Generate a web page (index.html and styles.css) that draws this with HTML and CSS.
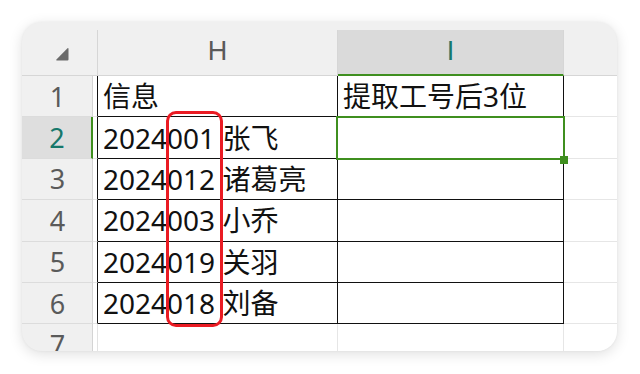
FILE: index.html
```html
<!DOCTYPE html>
<html lang="zh-CN">
<head>
<meta charset="utf-8">
<link rel="stylesheet" href="styles.css">
</head>
<body>
<div class="card">
  <div class="sheet">
    <div class="corner"><svg class="tri" width="14" height="14" viewBox="0 0 14 14"><path d="M12.5 1.2 Q13.5 0.6 13.5 2 L13.5 12.5 Q13.5 13.5 12.5 13.5 L2 13.5 Q0.6 13.5 1.4 12.6 Z" fill="#6b6b6b"/></svg></div>
    <div class="colhdr">H</div>
    <div class="colhdr sel">I</div>
    <div class="colhdr last"></div>

    <div class="rowhdr">1</div><div class="gap edge"></div><div class="cell h">信息</div><div class="cell i">提取工号后3位</div><div class="cell j"></div>
    <div class="rowhdr sel">2</div><div class="gap edge"></div><div class="cell h">2024001 张飞</div><div class="cell i"></div><div class="cell j"></div>
    <div class="rowhdr">3</div><div class="gap edge"></div><div class="cell h">2024012 诸葛亮</div><div class="cell i"></div><div class="cell j"></div>
    <div class="rowhdr">4</div><div class="gap edge"></div><div class="cell h">2024003 小乔</div><div class="cell i"></div><div class="cell j"></div>
    <div class="rowhdr">5</div><div class="gap edge"></div><div class="cell h">2024019 关羽</div><div class="cell i"></div><div class="cell j"></div>
    <div class="rowhdr">6</div><div class="gap edge"></div><div class="cell h">2024018 刘备</div><div class="cell i"></div><div class="cell j"></div>
    <div class="rowhdr">7</div><div class="gap"></div><div class="cell plain"></div><div class="cell plain"></div><div class="cell j"></div>
  </div>
  <div class="selection"></div>
  <div class="handle"></div>
  <div class="mark"></div>
</div>
</body>
</html>
```

FILE: styles.css
```css
* { box-sizing: border-box; }
html, body { margin: 0; background: #ffffff; }
body { width: 640px; height: 374px; overflow: hidden; }

.card {
  position: relative;
  margin: 22px 0 0 22px;
  width: 595px;
  height: 329px;
  border-radius: 20px;
  overflow: hidden;
  background: #f0f0f0;
  box-shadow: 0 3px 14px rgba(0, 0, 0, 0.13), 0 0 3px rgba(0, 0, 0, 0.05);
  font-family: "Noto Sans", "Noto Sans CJK SC", sans-serif;
}

.sheet {
  display: grid;
  grid-template-columns: 71px 5px 240px 226px 1fr;
  grid-template-rows: 46px repeat(7, 41.4px);
  padding-top: 8px;
}

.corner {
  grid-column: 1 / 3;
  border-right: 1px solid #d6d6d6;
  border-bottom: 1px solid #d6d6d6;
  display: flex;
  align-items: flex-end;
  justify-content: flex-end;
  padding: 0 28px 14px 0;
}
.tri { display: block; }

.colhdr {
  border-right: 1px solid #d6d6d6;
  border-bottom: 1px solid #d6d6d6;
  display: flex;
  align-items: center;
  justify-content: center;
  font-family: "Liberation Sans", "Noto Sans", sans-serif;
  font-size: 27px;
  color: #5a5a5a;
  padding-bottom: 2px;
}
.colhdr.sel {
  background: #dadada;
  color: #17786b;
  border-bottom: 2px solid #3f8f1f;
}
.colhdr.last { border-right: none; }

.rowhdr {
  border-right: 1px solid #d4d4d4;
  border-bottom: 1px solid #dcdcdc;
  display: flex;
  align-items: center;
  justify-content: center;
  font-size: 27px;
  color: #5a5a5a;
  padding-left: 1px;
}
.rowhdr.sel {
  background: #dedede;
  color: #17786b;
  border-right: 2px solid #3f8f1f;
}

.gap {
  background: #ffffff;
  border-right: 1px solid #e2e2e2;
  border-bottom: 1px solid #e6e6e6;
}
.gap.edge { border-right-color: #111111; }

.cell {
  background: #ffffff;
  display: flex;
  align-items: center;
  padding-left: 5px;
  font-size: 28px;
  color: #111111;
  white-space: nowrap;
  line-height: 1;
}
.cell.h, .cell.i {
  border-right: 1px solid #111111;
  border-bottom: 1px solid #111111;
}
.cell.j {
  border-bottom: 1px solid #e6e6e6;
}
.cell.plain {
  border-right: 1px solid #e6e6e6;
}

.selection {
  position: absolute;
  left: 314px;
  top: 94px;
  width: 229px;
  height: 44px;
  border: 2px solid #3f8f1f;
}
.handle {
  position: absolute;
  left: 538px;
  top: 134px;
  width: 8px;
  height: 8px;
  background: #3f8f1f;
}
.mark {
  position: absolute;
  left: 144px;
  top: 89px;
  width: 57px;
  height: 216px;
  border: 3px solid #ea1b23;
  border-radius: 10px;
}
```
